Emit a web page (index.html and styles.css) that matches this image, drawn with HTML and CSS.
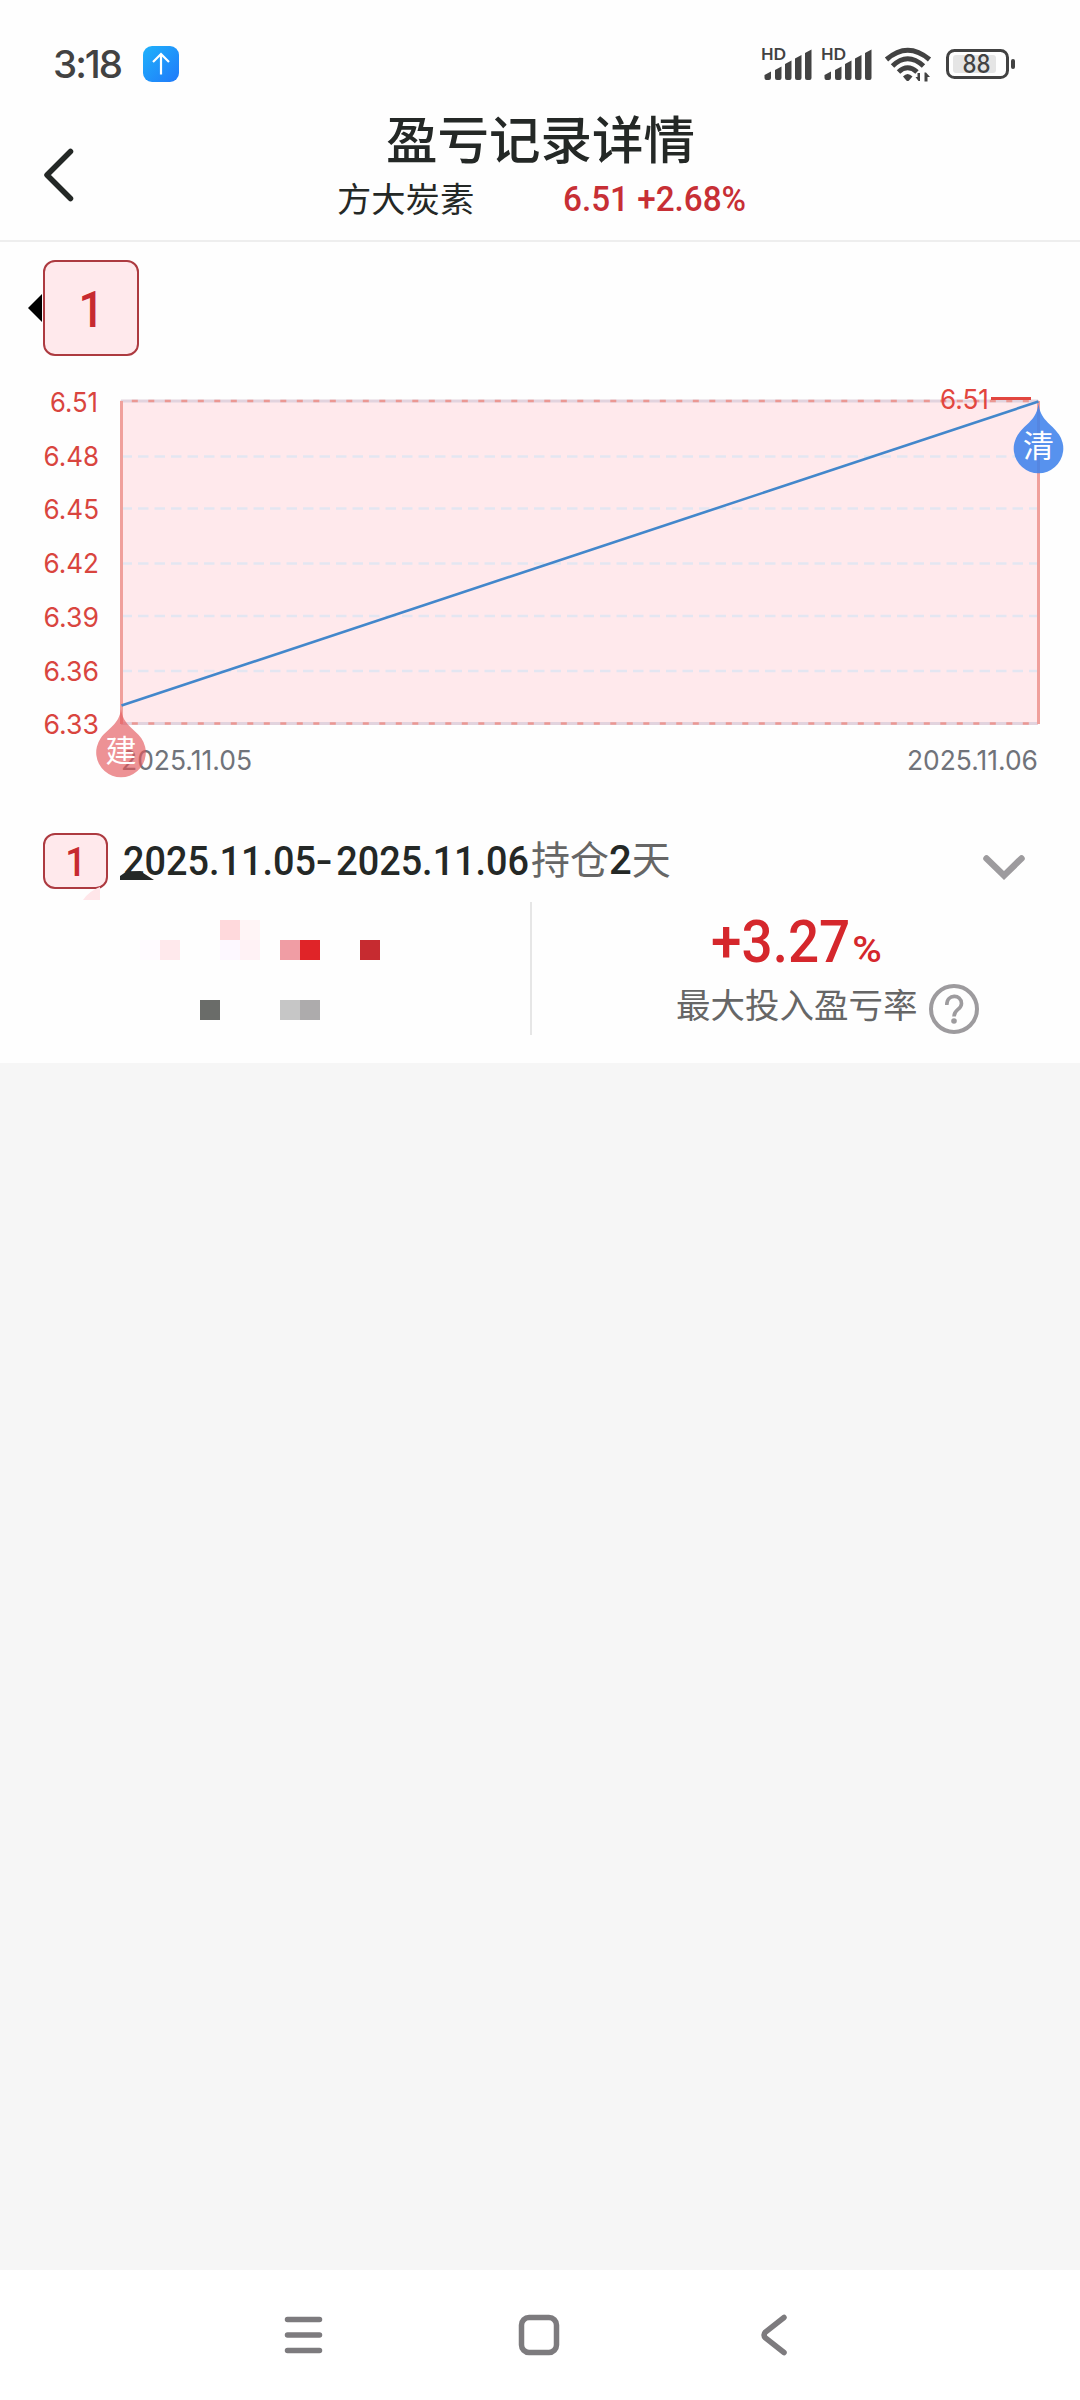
FILE: index.html
```html
<!DOCTYPE html>
<html lang="zh-CN">
<head>
    <meta charset="UTF-8">
    <meta name="viewport" content="width=device-width, initial-scale=1.0">
    <title>盈亏记录详情</title>
    <link rel="stylesheet" href="styles.css">
</head>
<body>
    <div class="status-bar">
        <span class="clock">3:18</span>
        <svg class="upload" width="36" height="36" viewBox="0 0 36 36">
            <defs>
                <linearGradient id="blue" x1="0" y1="0" x2="1" y2="1">
                    <stop offset="0" stop-color="#1fb2fb"/>
                    <stop offset="1" stop-color="#2079fa"/>
                </linearGradient>
            </defs>
            <rect width="36" height="36" rx="9" fill="url(#blue)"/>
            <path d="M18 28.500V8M10 16l8-8 8 8" fill="none" stroke="#fff" stroke-width="2.200"/>
        </svg>
        <svg class="status-icons" width="260" height="44" viewBox="760 42 260 44" fill="#424242">
            <g id="signal">
                <text x="761" y="60" class="hd" textLength="25" lengthAdjust="spacingAndGlyphs">HD</text>
                <path d="M764.500 75l6.500-3.500V78q0 2-2 2h-2.500q-2 0-2-2zM775 70l6.500-3.500V78q0 2-2 2H777q-2 0-2-2zM785 64l6.500-3.500V78q0 2-2 2H787q-2 0-2-2zM795 58.500l6.500-3.500V78q0 2-2 2H797q-2 0-2-2zM805 53l6.500-3.500V78q0 2-2 2H807q-2 0-2-2z"/>
            </g>
            <use href="#signal" x="60"/>
            <g fill="none" stroke="#424242" stroke-width="5">
                <path d="M886.500 59.500Q907.500 41 929.500 59.500"/>
                <path d="M892.500 66Q907.500 51.500 923.500 66"/>
                <path d="M898.500 72Q907.500 63.500 917 72"/>
            </g>
            <path d="M903 76.500q4.500-5 9.500 0l-3.500 4q-1.300 1-2.600 0z"/>
            <path d="M920 73v8h-1.500l-3-4h2V73zM924.500 81.500V72.500h1.500l4 4.500h-2.500v4.500z"/>
            <rect x="953" y="55" width="43" height="18" rx="3" fill="#e5e5e5"/>
            <rect x="947.500" y="50.500" width="60" height="27" rx="7" fill="none" stroke="#424242" stroke-width="3"/>
            <rect x="1011" y="59" width="4" height="10" rx="2"/>
            <text x="962.500" y="73" class="battery" textLength="28" lengthAdjust="spacingAndGlyphs">88</text>
        </svg>
    </div>

    <header class="header">
        <svg class="back" width="32" height="56" viewBox="0 0 32 56" fill="none" stroke="#242826" stroke-width="5.500" stroke-linecap="round" stroke-linejoin="round">
            <path d="M27.500 4.500L4 28l23.500 23.500"/>
        </svg>
        <h1>盈亏记录详情</h1>
        <div class="stock">
            <span class="stock-name">方大炭素</span>
            <span class="stock-price">6.51 +2.68%</span>
        </div>
    </header>

    <main class="record">
        <div class="tabs">
            <svg width="15" height="30" viewBox="0 0 15 30"><path d="M0 15L14 1v28z"/></svg>
            <div class="tab"><span>1</span></div>
        </div>

        <svg class="chart" width="1080" height="424" viewBox="0 374 1080 424">
            <rect x="120" y="400" width="919" height="324" fill="#ffe9ec"/>
            <g stroke="#e3e6f1" stroke-width="2.500" stroke-dasharray="10.500 6">
                <path d="M121.500 456.500H1038"/>
                <path d="M121.500 508.500H1038"/>
                <path d="M121.500 563.500H1038"/>
                <path d="M121.500 616H1038"/>
                <path d="M121.500 671H1038"/>
            </g>
            <path d="M121 401H1038M121 723.500H1038" stroke="#e2d3de" stroke-width="3"/>
            <path d="M131.800 401H1038M131.800 723.500H1038" stroke="#eb9893" stroke-width="2.500" stroke-dasharray="6 10.500"/>
            <path d="M121.500 401V724M1038.500 401V724" stroke="#f0a09c" stroke-width="3"/>
            <g class="axis-y">
                <text x="50" y="412" textLength="48" lengthAdjust="spacingAndGlyphs">6.51</text>
                <text x="43.500" y="466" textLength="55.500" lengthAdjust="spacingAndGlyphs">6.48</text>
                <text x="43.500" y="519" textLength="55.500" lengthAdjust="spacingAndGlyphs">6.45</text>
                <text x="43.500" y="573" textLength="55.500" lengthAdjust="spacingAndGlyphs">6.42</text>
                <text x="43.500" y="627" textLength="55.500" lengthAdjust="spacingAndGlyphs">6.39</text>
                <text x="43.500" y="681" textLength="55.500" lengthAdjust="spacingAndGlyphs">6.36</text>
                <text x="43.500" y="734" textLength="55.500" lengthAdjust="spacingAndGlyphs">6.33</text>
            </g>
            <g class="axis-x">
                <text x="121" y="770" textLength="131" lengthAdjust="spacingAndGlyphs">2025.11.05</text>
                <text x="907" y="770" textLength="131" lengthAdjust="spacingAndGlyphs">2025.11.06</text>
            </g>
            <path d="M121.500 705.500L1038.500 401.500" stroke="#4387cb" stroke-width="2.600"/>
            <text x="940" y="409" class="peak" textLength="49" lengthAdjust="spacingAndGlyphs">6.51</text>
            <path d="M991 398.500H1031" stroke="#e2463f" stroke-width="3"/>
            <path d="M121 709C123 725 134 728 141.500 738.500A24.800 24.800 0 1 1 100.500 738.500C108 728 119 725 121 709z" fill="#e3575c" opacity=".65"/>
            <path d="M1038.500 403C1040 420 1051 423 1059 434.500A24.800 24.800 0 1 1 1018 434.500C1026 423 1037 420 1038.500 403z" fill="#3e82ec" opacity=".87"/>
            <text x="121" y="762" class="marker">建</text>
            <text x="1038.500" y="457" class="marker">清</text>
        </svg>

        <div class="period">
            <div class="badge"><span>1</span></div>
            <svg class="corner" width="17" height="13" viewBox="0 0 17 13"><path d="M0 13Q6 4 17 0v13z" fill="#ffe6e9"/></svg>
            <svg class="smudge" width="34" height="9" viewBox="0 0 34 9"><path d="M0 9V5L5 1.500 20 0l14 9z" fill="#242826"/></svg>
            <div class="range">2025.11.05<i>-</i>2025.11.06</div>
            <div class="held">持仓<b>2</b>天</div>
            <svg class="chevron" width="42" height="26" viewBox="0 0 42 26" fill="none" stroke="#9d9b9e" stroke-width="6.500" stroke-linecap="round">
                <path d="M3.500 3.500L21 20.500 38.500 3.500"/>
            </svg>
        </div>

        <div class="totals">
            <svg class="masked" width="240" height="100" viewBox="140 920 240 100" shape-rendering="crispEdges">
                <rect x="140" y="940" width="20" height="20" fill="#fffbff"/>
                <rect x="160" y="940" width="20" height="20" fill="#ffe9ec"/>
                <rect x="220" y="920" width="20" height="20" fill="#ffd9dc"/>
                <rect x="240" y="920" width="20" height="20" fill="#fff5f6"/>
                <rect x="220" y="940" width="20" height="20" fill="#fdf8ff"/>
                <rect x="240" y="940" width="20" height="20" fill="#fff2f5"/>
                <rect x="280" y="940" width="20" height="20" fill="#f09da4"/>
                <rect x="300" y="940" width="20" height="20" fill="#e02428"/>
                <rect x="360" y="940" width="20" height="20" fill="#c62b30"/>
                <rect x="200" y="1000" width="20" height="20" fill="#6a6c69"/>
                <rect x="280" y="1000" width="20" height="20" fill="#c6c6c6"/>
                <rect x="300" y="1000" width="20" height="20" fill="#adabac"/>
            </svg>
            <div class="rate">
                <div class="rate-value">+3.27<small>%</small></div>
                <div class="rate-label">
                    <span>最大投入盈亏率</span>
                    <svg width="50" height="50" viewBox="0 0 50 50" fill="none" stroke="#9d9b9e">
                        <circle cx="25" cy="25" r="23" stroke-width="4"/>
                        <path d="M17.800 21C17.800 9.500 32.500 10 32.500 19.500C32.500 26 25 25 25 32.500" stroke-width="3.600"/>
                        <circle cx="25" cy="37" r="2.800" fill="#9d9b9e" stroke="none"/>
                    </svg>
                </div>
            </div>
        </div>
    </main>

    <nav class="nav-bar">
        <svg width="40" height="42" viewBox="0 0 40 42"><path d="M3.500 5.500h32M3.500 21h32M3.500 36.500h32"/></svg>
        <svg width="42" height="42" viewBox="0 0 42 42"><rect x="3.500" y="3.500" width="35" height="35" rx="7.500"/></svg>
        <svg width="28" height="42" viewBox="0 0 28 42"><path d="M24 3.500L5.500 18q-3 3 0 6L24 38.500"/></svg>
    </nav>
</body>
</html>
```
FILE: styles.css
```css
* {
    box-sizing: border-box;
}
body {
    margin: 0;
    width: 1080px;
    height: 2400px;
    display: flex;
    flex-direction: column;
    background-color: #f6f6f6;
    font-family: Roboto, "Noto Sans CJK SC", sans-serif;
    color: #242826;
}
svg {
    display: block;
    flex: none;
}

/* status bar */
.status-bar {
    height: 100px;
    padding: 42px 60px 0 53px;
    display: flex;
    background-color: #fefefe;
}
.clock {
    width: 90px;
    font: 500 38.500px/44px Inter, sans-serif;
    letter-spacing: -2px;
    color: #424242;
}
.upload {
    margin-top: 4px;
}
.status-icons {
    margin-left: auto;
}
.hd {
    font: 700 17px Lato, sans-serif;
}
.battery {
    font: 500 25px Inter, sans-serif;
}

/* title */
.header {
    height: 142px;
    display: grid;
    grid-template-columns: 338px 1fr;
    grid-template-rows: 78px 62px;
    background-color: #fefefe;
    border-bottom: 2px solid #eee;
}
.back {
    grid-row: 1 / 3;
    margin: 47px 0 0 43px;
}
h1 {
    margin: 3px 0 0 48px;
    font-size: 51.500px;
    line-height: 78px;
    font-weight: 500;
    white-space: nowrap;
}
.stock {
    display: flex;
    line-height: 44px;
}
.stock-name {
    width: 226px;
    margin-left: -1px;
    font-size: 34.300px;
}
.stock-price {
    font-size: 35px;
    font-weight: 500;
    transform: scaleX(0.950);
    transform-origin: left;
    color: #c72f35;
}

/* record card */
.record {
    height: 821px;
    background-color: #fefefe;
}
.tabs {
    display: flex;
    align-items: center;
    height: 132px;
    padding: 0 0 0 28px;
}
.tab,
.badge {
    text-align: center;
    font-weight: 500;
    color: #c72a30;
    background-color: #ffe9ec;
    border: 2px solid #ad3a40;
    border-radius: 12px;
}
.tab span,
.badge span {
    display: inline-block;
    transform: scaleX(0.900);
}
.tab {
    width: 96px;
    height: 96px;
    font-size: 50px;
    line-height: 97px;
}
.axis-y,
.axis-x,
.peak {
    font: 400 27.500px Inter, sans-serif;
}
.axis-y {
    fill: #d9453e;
}
.axis-x {
    fill: #70737a;
}
.peak {
    fill: #e2463f;
}
.marker {
    font: 400 31px "Noto Sans CJK SC", sans-serif;
    text-anchor: middle;
    fill: #fff;
}
.period {
    position: relative;
    display: flex;
    height: 100px;
    padding: 35px 55px 0 43px;
}
.badge {
    width: 65px;
    height: 56px;
    font-size: 41px;
    line-height: 55px;
}
.corner {
    position: absolute;
    left: 83px;
    top: 89px;
}
.smudge {
    position: absolute;
    left: 120px;
    top: 73px;
}
.range {
    width: 408px;
    margin-left: 15px;
    font-size: 41px;
    line-height: 56px;
    font-weight: 500;
    white-space: nowrap;
    transform: scaleX(0.922);
    transform-origin: left;
}
.range i {
    display: inline-block;
    width: 22px;
    font-style: normal;
    transform: scaleX(1.300);
    transform-origin: left;
}
.held {
    font-size: 39px;
    line-height: 56px;
    color: #666;
}
.held b {
    font-size: 40px;
    font-weight: 500;
    color: #242826;
}
.chevron {
    margin: 22px 0 0 auto;
}
.totals {
    display: flex;
    height: 133px;
    margin-top: 4px;
}
.masked {
    margin: 18px 150px 0 140px;
}
.rate {
    width: 550px;
    border-left: 2px solid #e6e6e6;
    padding-left: 144px;
}
.rate-value {
    height: 82px;
    margin-left: 35px;
    font-size: 59px;
    line-height: 80px;
    font-weight: 500;
    transform: scaleX(0.930);
    transform-origin: left;
    color: #d5272c;
}
.rate-value small {
    display: inline-block;
    margin-left: 2px;
    font-size: 36px;
    transform: scaleX(1.200);
    transform-origin: left;
}
.rate-label {
    display: flex;
    gap: 11px;
    font-size: 34.500px;
    line-height: 44px;
    color: #666;
}

/* system navigation */
.nav-bar {
    height: 130px;
    margin-top: auto;
    padding: 44px 292px 0 284px;
    display: flex;
    justify-content: space-between;
    background-color: #fff;
}
.nav-bar svg {
    fill: none;
    stroke: #7d7b7e;
    stroke-width: 5.500;
    stroke-linecap: round;
}
.nav-bar svg:nth-child(2) {
    margin-right: 6px;
}
```
